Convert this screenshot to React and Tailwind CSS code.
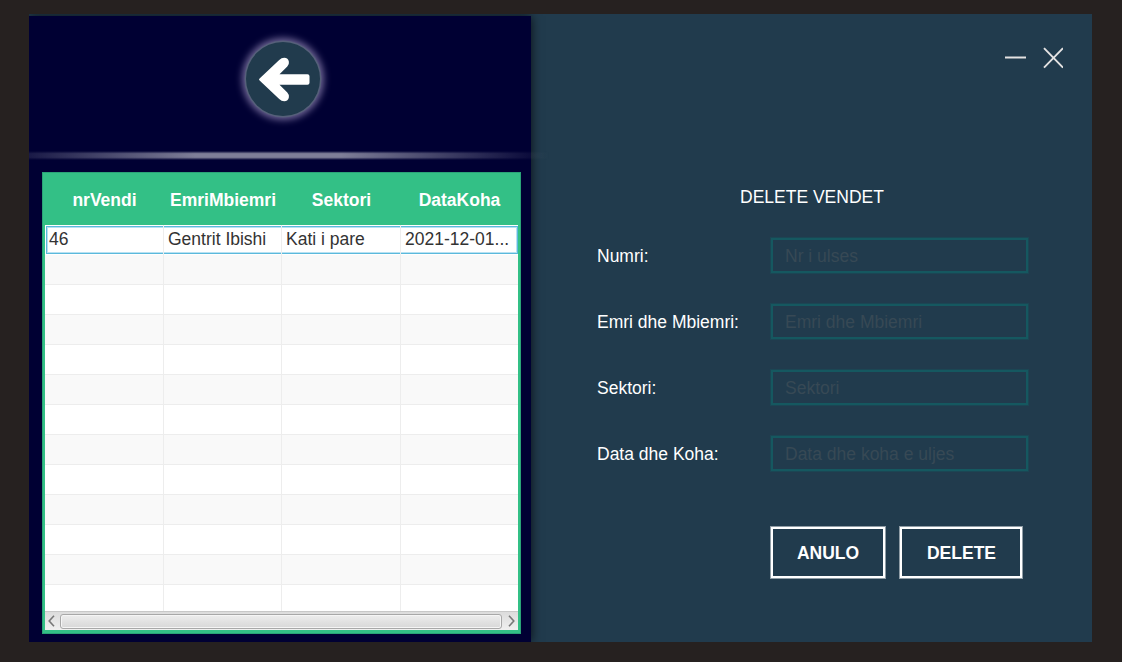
const columns = [
  { title: "nrVendi", value: "46" },
  { title: "EmriMbiemri", value: "Gentrit Ibishi" },
  { title: "Sektori", value: "Kati i pare" },
  { title: "DataKoha", value: "2021-12-01..." },
];

const fields = [
  { label: "Numri:", hint: "Nr i ulses" },
  { label: "Emri dhe Mbiemri:", hint: "Emri dhe Mbiemri" },
  { label: "Sektori:", hint: "Sektori" },
  { label: "Data dhe Koha:", hint: "Data dhe koha e uljes" },
];

const emptyRows = Array.from({ length: 12 }, (_, i) => i);

function BackButton() {
  return (
    <button
      aria-label="Back"
      className="flex h-[74px] w-[74px] items-center justify-center rounded-full bg-[#213b4d] shadow-[0_0_0_1.5px_#56607a,0_0_7px_4px_rgba(185,170,215,0.6)]"
    >
      <svg width="74" height="74" viewBox="0 0 74 74">
        <path
          d="M61.5 32.2H33.5L41.3 24.6Q43.4 22.3 42.9 19.8Q42.2 16 38.2 15.8Q35.5 15.8 33.2 18L13.6 36.4Q12.4 37.5 13.6 38.6L33.2 57Q35.5 59.2 38.2 59.2Q42.2 59 42.9 55.2Q43.4 52.7 41.3 50.4L33.5 42.8H61.5Q63.5 42.8 63.5 40.8V34.2Q63.5 32.2 61.5 32.2Z"
          fill="#fff"
        />
      </svg>
    </button>
  );
}

function Table() {
  return (
    <div className="ml-[13px] flex h-[462px] w-[479px] flex-col border border-[#2aa477] bg-[#33c086] px-[2px] pb-[3px]">
      <div className="grid h-[52px] shrink-0 grid-cols-[119px_118px_119px_117px] items-center pt-[3px] text-center text-[17.5px] font-bold text-white">
        {columns.map((c) => (
          <span key={c.title}>{c.title}</span>
        ))}
      </div>
      <div className="min-h-0 flex-1 overflow-hidden bg-white">
        <div className="relative grid h-[30px] grid-cols-[119px_118px_119px_117px] text-[17.5px] leading-[28px] text-[#333]">
          <div className="absolute top-[1px] right-0 bottom-[1px] left-[1px] border border-[#5bb9dc] shadow-[inset_0_0_0_1px_#b8e1f2]" />
          {columns.map((c) => (
            <span key={c.title} className="relative border-r border-[#ededed] pl-[4px] whitespace-nowrap last:border-r-0">
              {c.value}
            </span>
          ))}
        </div>
        {emptyRows.map((i) => (
          <div
            key={i}
            className="grid h-[30px] grid-cols-[119px_118px_119px_117px] border-b border-[#ededed] odd:bg-white even:bg-[#f9f9f9]"
          >
            <span className="border-r border-[#ededed]" />
            <span className="border-r border-[#ededed]" />
            <span className="border-r border-[#ededed]" />
          </div>
        ))}
      </div>
      <div className="flex h-[19px] shrink-0 items-center justify-between border-t border-[#c8c8c8] bg-linear-to-b from-[#dcdcdc] to-[#f0f0f0] pr-[3px] pl-[3px]">
        <svg width="7" height="12" viewBox="0 0 7 12" fill="none" stroke="#777" strokeWidth="1.6">
          <path d="M6 .8L1.2 6L6 11.2" />
        </svg>
        <div className="ml-[5px] h-[15px] flex-1 rounded-[3px] border border-[#a8a8a8] bg-linear-to-b from-[#ededed] to-[#d8d8d8] shadow-[inset_0_0_0_1px_#f5f5f5]" />
        <svg className="ml-[6px]" width="7" height="12" viewBox="0 0 7 12" fill="none" stroke="#777" strokeWidth="1.6">
          <path d="M1 .8L5.8 6L1 11.2" />
        </svg>
      </div>
    </div>
  );
}

export default function App() {
  return (
    <div className="h-[662px] w-[1122px] overflow-hidden bg-[#262120] pt-[14px] pl-[29px] font-['Liberation_Sans',Arial,sans-serif]">
      <div className="flex h-[628px] w-[1063px] overflow-hidden bg-[#213b4d] pt-[2px]">
        <aside className="relative z-10 flex w-[502px] shrink-0 flex-col bg-[#000033] shadow-[0_0_10px_0_rgba(0,0,0,0.75)]">
          <div className="flex h-[135px] justify-center pt-[26px] pl-[6px]">
            <BackButton />
          </div>
          <div className="h-[9px] w-[520px] bg-[linear-gradient(90deg,#7e7e9833_0%,#7e7e98_32%,#7e7e98_60%,#7e7e9800_100%)] [mask-image:linear-gradient(transparent,black_30%,black_70%,transparent)]" />
          <div className="h-[12px]" />
          <Table />
        </aside>

        <main className="flex-1 text-[17.5px] leading-[20px] text-white">
          <div className="flex items-start justify-end pt-[31px] pr-[29px]">
            <svg width="62" height="24" viewBox="0 0 62 24" fill="none" stroke="#e4e2e2">
              <path d="M4 10.5H25" strokeWidth="2" />
              <path d="M43 1.2L62 20.7M62 1.2L43 20.7" strokeWidth="1.9" />
            </svg>
          </div>
          <h1 className="mt-[116px] pl-[209px] font-normal">DELETE VENDET</h1>
          <form className="mt-[31px] flex flex-col gap-[31px] pl-[66px]">
            {fields.map((f) => (
              <label key={f.label} className="flex h-[35px] items-center">
                <span className="w-[174px]">{f.label}</span>
                <input
                  type="text"
                  placeholder={f.hint}
                  className="h-[35px] w-[257px] border-2 border-[#155860] bg-transparent px-[12px] pt-[2px] shadow-[0_0_0_1px_rgba(21,88,96,0.4)] outline-none placeholder:text-[#374955]"
                />
              </label>
            ))}
          </form>
          <div className="mt-[56px] flex gap-[16px] pl-[240px] font-bold">
            <button className="h-[51px] w-[114px] border-2 border-white pt-px shadow-[0_0_0_1px_rgba(255,255,255,0.5)]">ANULO</button>
            <button className="-ml-px h-[51px] w-[122px] border-2 border-white pt-px pl-px shadow-[0_0_0_1px_rgba(255,255,255,0.5)]">DELETE</button>
          </div>
        </main>
      </div>
    </div>
  );
}
